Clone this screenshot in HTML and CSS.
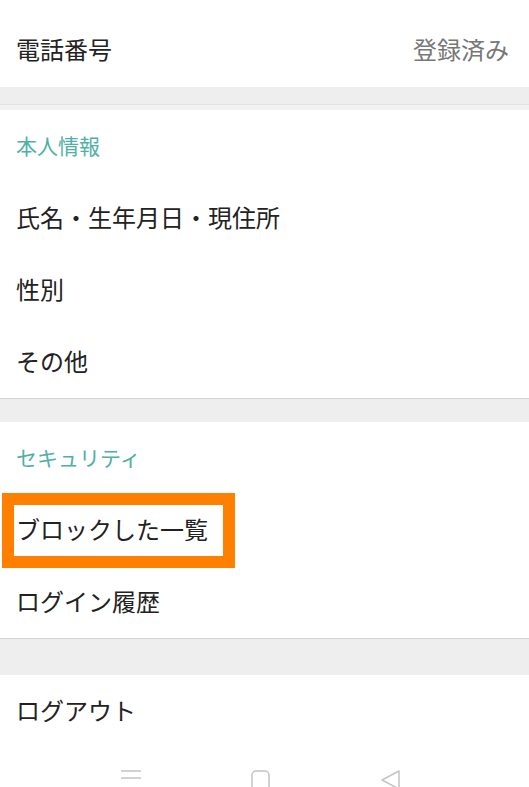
FILE: index.html
```html
<!DOCTYPE html>
<html lang="ja">
<head>
    <meta charset="UTF-8">
    <meta name="viewport" content="width=device-width, initial-scale=1.0">
    <title>アカウント設定</title>
    <link rel="stylesheet" href="styles.css">
</head>
<body>
    <div class="screen">
        <div class="card">
            <div class="row row-top">
                <span>電話番号</span>
                <span class="value">登録済み</span>
            </div>
        </div>
        <div class="gap gap-first"></div>

        <div class="card bordered">
            <div class="row header">本人情報</div>
            <div class="row">氏名・生年月日・現住所</div>
            <div class="row">性別</div>
            <div class="row">その他</div>
        </div>
        <div class="gap"></div>

        <div class="card bordered">
            <div class="row header">セキュリティ</div>
            <div class="row highlighted">
                ブロックした一覧
                <div class="mark"></div>
            </div>
            <div class="row">ログイン履歴</div>
        </div>
        <div class="gap gap-tall"></div>

        <div class="card">
            <div class="row">ログアウト</div>
        </div>

        <div class="navbar">
            <svg class="nav-icon" width="22" height="12" viewBox="0 0 22 12">
                <path d="M1 1 H21 M1 8 H21" stroke="#c4c4c4" stroke-width="1.5" fill="none"/>
            </svg>
            <svg class="nav-icon" width="22" height="20" viewBox="0 0 22 20">
                <rect x="2" y="1" width="17" height="22" rx="4" stroke="#c4c4c4" stroke-width="1.5" fill="none"/>
            </svg>
            <svg class="nav-icon" width="22" height="20" viewBox="0 0 22 20">
                <path d="M19 1 L2 10 L19 19 Z" stroke="#c4c4c4" stroke-width="1.5" stroke-linejoin="round" fill="none"/>
            </svg>
        </div>
    </div>
</body>
</html>
```

FILE: styles.css
```css
body {
    margin: 0;
    background-color: #ffffff;
    font-family: "Noto Sans CJK JP", "Noto Sans", sans-serif;
    color: #222222;
}

.screen {
    width: 529px;
    height: 787px;
    overflow: hidden;
}

.card {
    background: white;
}

.card.bordered {
    border-bottom: 1px solid #d4d4d4;
}

.row {
    position: relative;
    display: flex;
    align-items: center;
    box-sizing: border-box;
    height: 72px;
    padding: 0 16px 3px;
    font-size: 24px;
}

.row-top {
    height: 87px;
    padding-top: 13px;
    padding-right: 20px;
    justify-content: space-between;
}

.value {
    color: #777777;
}

.header {
    font-size: 21px;
    color: #4fb0a6;
}

.gap {
    height: 23px;
    background-color: #eeeeee;
}

.gap-first {
    box-shadow: inset 0 -5px 0 #f2f2f2, inset 0 -6px 0 #e2e2e2;
}

.gap-tall {
    height: 36px;
}

.mark {
    position: absolute;
    left: 2px;
    top: -1px;
    width: 209px;
    height: 51px;
    border: 12px solid #ff8000;
}

.navbar {
    display: flex;
    justify-content: center;
    gap: 108px;
    padding-top: 23px;
    padding-right: 8px;
}

.nav-icon {
    display: block;
}
```
